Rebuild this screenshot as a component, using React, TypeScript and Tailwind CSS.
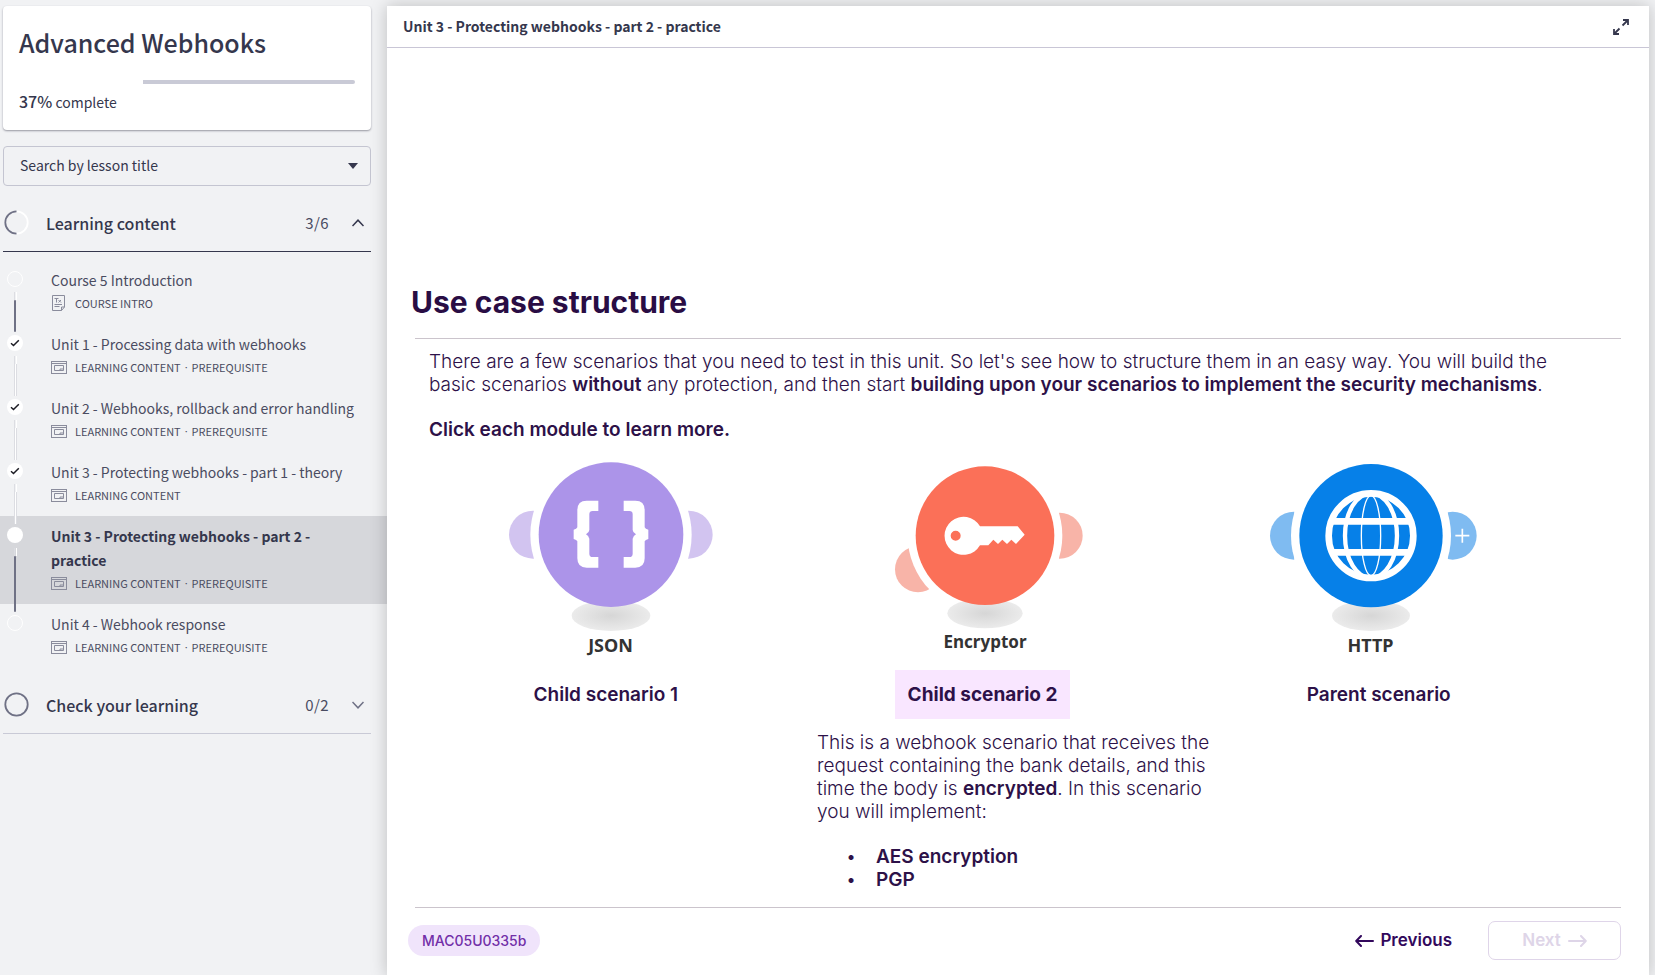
import type { ReactNode } from "react";

type Status = "empty" | "done" | "current";

interface Lesson {
  title: string;
  tags: string[];
  status: Status;
  icon: "text" | "content";
  line?: "light" | "dark";
}

const lessons: Lesson[] = [
  { title: "Course 5 Introduction", tags: ["COURSE INTRO"], status: "empty", icon: "text", line: "dark" },
  { title: "Unit 1 - Processing data with webhooks", tags: ["LEARNING CONTENT", "PREREQUISITE"], status: "done", icon: "content", line: "light" },
  { title: "Unit 2 - Webhooks, rollback and error handling", tags: ["LEARNING CONTENT", "PREREQUISITE"], status: "done", icon: "content", line: "light" },
  { title: "Unit 3 - Protecting webhooks - part 1 - theory", tags: ["LEARNING CONTENT"], status: "done", icon: "content", line: "light" },
  { title: "Unit 3 - Protecting webhooks - part 2 - practice", tags: ["LEARNING CONTENT", "PREREQUISITE"], status: "current", icon: "content", line: "dark" },
  { title: "Unit 4 - Webhook response", tags: ["LEARNING CONTENT", "PREREQUISITE"], status: "empty", icon: "content" },
];

function ContentIcon() {
  return (
    <svg width="16" height="13" viewBox="0 0 16 13" fill="none" stroke="#8a8c9c" aria-hidden="true">
      <rect x="0.5" y="0.5" width="15" height="12" />
      <path d="M0.5 2.5H15.5" />
      <path d="M3.500 4.500H12.500V9.500H3.500Z" />
      <path d="M9 9.500V8H12.500" />
    </svg>
  );
}

function TextIcon() {
  return (
    <svg width="16" height="16" viewBox="0 0 16 16" fill="none" stroke="#8a8c9c" aria-hidden="true">
      <path d="M1.500 0.500H13.500V12L10.500 15.500H1.500Z M13.500 12H10.500V15.500" />
      <path d="M3.500 3.500H7.500M5.500 3.500V7.500M7.500 5L10 7.500M10 5L7.500 7.500" />
      <path d="M3.500 9.500H11M3.500 11.500H8.500" />
    </svg>
  );
}

function StatusDot({ status }: { status: Status }) {
  if (status === "empty") {
    return <span className="size-4 shrink-0 rounded-full border border-white" />;
  }
  return (
    <span className="flex size-4 shrink-0 items-center justify-center rounded-full bg-white">
      {status === "done" && (
        <svg width="10" height="8" viewBox="0 0 10 8" fill="none" stroke="#1c1c24" strokeWidth="1.5" aria-hidden="true">
          <path d="M1 4.200L3.500 6.500L8.800 1.200" />
        </svg>
      )}
    </span>
  );
}

function LessonRow({ lesson }: { lesson: Lesson }) {
  const active = lesson.status === "current";
  return (
    <li className={active ? "flex bg-[#d6d7db]" : "flex"}>
      <div className="relative z-10 flex w-[51px] shrink-0 flex-col items-start pt-[11px] pl-[7px]">
        <StatusDot status={lesson.status} />
        {lesson.line && (
          <span className="mt-[5px] -mb-2 ml-[7px] flex w-[3px] flex-1 flex-col">
            <span className="h-2 border-r border-l border-r-white border-l-[#dcdde2]" />
            <span
              className={
                lesson.line === "dark"
                  ? "w-[2px] flex-1 rounded-full bg-[#6f7185]"
                  : "flex-1 border-r border-l border-r-[#dcdde2] border-l-[#dcdde2] bg-white"
              }
            />
          </span>
        )}
      </div>
      <a href="#lesson" className="flex-1 pt-2 pr-6 pb-[10px]">
        <span className={active ? "block text-[14px] leading-6 font-bold text-[#35374d]" : "block text-[14px] leading-6 text-[#4a4c61]"}>
          {lesson.title}
        </span>
        <span className="flex h-[22px] items-center gap-2 text-[11px] leading-5 text-[#4a4c61]">
          {lesson.icon === "text" ? <TextIcon /> : <ContentIcon />}
          <span className="flex gap-1">
            {lesson.tags.map((tag, i) => (
              <span key={tag} className="flex gap-1">
                {i > 0 && <span className="font-['Open_Sans',sans-serif]">·</span>}
                {tag}
              </span>
            ))}
          </span>
        </span>
      </a>
    </li>
  );
}

function SectionHeader({ title, count, open }: { title: string; count: string; open: boolean }) {
  return (
    <button
      type="button"
      aria-expanded={open}
      className={
        open
          ? "mt-2 mr-4 ml-[3px] flex h-[58px] items-center border-b border-[#35374d] pr-[7px] pl-px text-left"
          : "mt-2 mr-4 ml-[3px] flex h-[58px] items-center border-b border-[#c9cad6] pr-[7px] pl-px text-left"
      }
    >
      <svg width="25" height="25" viewBox="0 0 25 25" fill="none" strokeWidth="1.8" aria-hidden="true">
        <circle cx="12.500" cy="12.500" r="11.200" stroke={open ? "#ffffff" : "#6f7185"} />
        {open && <path d="M12.500 1.300A11.200 11.200 0 0 0 12.500 23.700" stroke="#6f7185" />}
      </svg>
      <span className="ml-[17px] flex-1 text-[16px] leading-6 font-medium text-[#35374d]">{title}</span>
      <span className="text-[15px] leading-6 tracking-wide text-[#4a4c61]">{count}</span>
      <svg className="ml-[23px]" width="12" height="8" viewBox="0 0 12 8" fill="none" stroke={open ? "#35374d" : "#6f7185"} strokeWidth="1.500" aria-hidden="true">
        <path d={open ? "M0.500 7L6 1.200L11.500 7" : "M0.500 1L6 6.800L11.500 1"} />
      </svg>
    </button>
  );
}

function Sidebar() {
  return (
    <aside className="flex w-[387px] shrink-0 flex-col pt-[6px] font-['Noto_Sans_CJK_SC','Noto_Sans',sans-serif]">
      <section className="mr-4 ml-[3px] rounded-[4px] bg-white px-4 pt-5 pb-4 shadow-[0_1px_2px_rgba(40,40,60,0.45)]">
        <h1 className="text-[25px] leading-8 font-medium text-[#35374d]">Advanced Webhooks</h1>
        <div role="progressbar" aria-label="Course progress" aria-valuenow={37} aria-valuemin={0} aria-valuemax={100} className="mt-[22px] flex h-1">
          <span className="w-[37%] bg-white" />
          <span className="flex-1 rounded-r-full bg-[#c9cad6]" />
        </div>
        <p className="mt-[6px] text-[14px] leading-6 text-[#35374d]">
          <strong className="text-[16px] leading-none font-medium">37%</strong> complete
        </p>
      </section>

      <div className="relative mt-4 mr-4 ml-[3px]">
        <select aria-label="Search by lesson title" className="block h-10 w-full appearance-none rounded-[4px] border border-[#c4c5d1] bg-transparent px-4 pb-[2px] text-[14px] text-[#35374d]">
          <option>Search by lesson title</option>
        </select>
        <svg className="pointer-events-none absolute top-4 right-[13px]" width="10" height="8" viewBox="0 0 10 8" fill="#35374d" aria-hidden="true">
          <path d="M0 1H10L5 7Z" />
        </svg>
      </div>

      <SectionHeader title="Learning content" count="3/6" open />
      <ul className="pt-2">
        {lessons.map((l) => (
          <LessonRow key={l.title} lesson={l} />
        ))}
      </ul>
      <SectionHeader title="Check your learning" count="0/2" open={false} />
    </aside>
  );
}

/* Module drawings use three units per pixel. */
function JsonModule() {
  return (
    <svg width="220" height="174" viewBox="61 57 660 522" aria-hidden="true">
      <defs>
        <radialGradient id="floor">
          <stop offset="0" stopColor="#d6d6d6" />
          <stop offset="1" stopColor="#ebebeb" />
        </radialGradient>
      </defs>
      <circle cx="157" cy="284" r="72" fill="#d2c4f0" />
      <circle cx="624" cy="284" r="72" fill="#d2c4f0" />
      <path d="M160 200H622V370H160Z" fill="#fff" />
      <circle cx="391" cy="284" r="242" fill="#fff" />
      <ellipse cx="391" cy="527" rx="118" ry="46" fill="url(#floor)" />
      <circle cx="391" cy="284" r="217" fill="#ac94e9" />
      <g fill="#fff">
        <path d="M353 182H318Q290 182 290 210V262Q288 267 279 269V297Q288 299 290 304V355Q290 383 318 383H353V351H336Q326 351 326 341V296Q326 289 316 283Q326 277 326 270V223Q326 213 336 213H353Z" />
        <path d="M429 182H464Q492 182 492 210V262Q494 267 503 269V297Q494 299 492 304V355Q492 383 464 383H429V351H446Q456 351 456 341V296Q456 289 466 283Q456 277 456 270V223Q456 213 446 213H429Z" />
      </g>
    </svg>
  );
}

function EncryptorModule() {
  return (
    <svg width="220" height="171" viewBox="46 57 660 513" aria-hidden="true">
      <circle cx="175" cy="388" r="69" fill="#f8b4a8" />
      <circle cx="600" cy="287" r="69" fill="#f8b4a8" />
      <path d="M376 200H598V370H376Z" fill="#fff" />
      <circle cx="376" cy="287" r="232" fill="#fff" />
      <ellipse cx="376" cy="520" rx="113" ry="45" fill="url(#floor)" />
      <circle cx="376" cy="287" r="208" fill="#fb7058" />
      <path
        fill="#fff"
        fillRule="evenodd"
        d="M361 259A57 57 0 1 0 361 316H386L401 299L415 312L428 299L442 312L455 299L469 312L495 284L474 259ZM288 272A15 15 0 1 1 288 302A15 15 0 1 1 288 272Z"
      />
    </svg>
  );
}

function HttpModule() {
  return (
    <svg width="220" height="174" viewBox="62 57 660 522" aria-hidden="true">
      <circle cx="161" cy="287" r="72" fill="#7fbbf1" />
      <circle cx="637" cy="287" r="72" fill="#7fbbf1" />
      <path d="M162 200H622V370H162Z" fill="#fff" />
      <circle cx="392" cy="287" r="240" fill="#fff" />
      <path d="M645 287H687M666 266V308" stroke="#fff" strokeWidth="5" />
      <ellipse cx="392" cy="527" rx="117" ry="46" fill="url(#floor)" />
      <circle cx="392" cy="287" r="215" fill="#0680e8" />
      <g fill="none" stroke="#fff">
        <circle cx="392" cy="287" r="127" strokeWidth="20" />
        <ellipse cx="392" cy="287" rx="78" ry="127" strokeWidth="13" />
        <ellipse cx="392" cy="287" rx="29" ry="120" strokeWidth="4" />
        <path d="M275 244H509M275 337H509" strokeWidth="20" />
      </g>
    </svg>
  );
}

function Module({ name, compact, children }: { name: string; compact?: boolean; children: ReactNode }) {
  return (
    <button type="button" className="flex flex-col items-center font-['Noto_Sans',sans-serif] font-bold text-[#333333]">
      {children}
      <span className={compact ? "text-[17px] leading-6" : "text-[18px] leading-6"}>{name}</span>
    </button>
  );
}

const steps = ["AES encryption", "PGP"];

export default function App() {
  return (
    <div className="flex min-h-screen bg-[#f1f2f4]">
      <Sidebar />
      <main className="relative mt-[6px] mr-[6px] flex min-w-0 flex-1 flex-col bg-white font-['Inter',sans-serif] text-[#2d1148] shadow-[0_0_16px_rgba(0,0,0,0.22)]">
        <header className="flex h-[42px] items-center justify-between border-b border-[#c9c6d6] pr-5 pl-4">
          <h2 className="font-['Noto_Sans_CJK_SC','Noto_Sans',sans-serif] text-[14px] font-bold text-[#35374d]">
            Unit 3 - Protecting webhooks - part 2 - practice
          </h2>
          <button type="button" aria-label="Full screen">
            <svg width="16" height="16" viewBox="0 0 16 16" fill="none" stroke="#35374d" strokeWidth="1.800" aria-hidden="true">
              <path d="M10 1H15V6M15 1L9.500 6.500M1 10V15H6M1 15L6.500 9.500" />
            </svg>
          </button>
        </header>

        <div className="flex flex-col px-7">
          <h1 className="mt-[234px] -ml-1 text-[30px] leading-10 font-bold text-[#290d44]">Use case structure</h1>
          <div className="mt-4 border-t border-[#cbc4cc] pt-[11px] pl-[14px] text-[19px] leading-[23px] font-light">
            <p className="max-w-[1140px]">
              There are a few scenarios that you need to test in this unit. So let's see how to structure them in an easy way. You will build the basic scenarios{" "}
              <strong className="font-semibold">without</strong> any protection, and then start{" "}
              <strong className="font-semibold">building upon your scenarios to implement the security mechanisms</strong>.
            </p>
            <p className="mt-[22px] font-semibold">Click each module to learn more.</p>
          </div>

          <div className="mt-[18px] grid grid-cols-[391fr_358fr_413fr] items-start pr-11">
            <Module name="JSON">
              <JsonModule />
            </Module>
            <Module name="Encryptor" compact>
              <EncryptorModule />
            </Module>
            <Module name="HTTP">
              <HttpModule />
            </Module>
          </div>
          <div className="mt-[13px] grid grid-cols-[382fr_372fr_421fr] justify-items-center pr-8 text-[19px] leading-[23px] font-semibold">
            <h3 className="p-[13px]">Child scenario 1</h3>
            <h3 className="bg-[#f9e6ff] p-[13px] font-bold">Child scenario 2</h3>
            <h3 className="p-[13px]">Parent scenario</h3>
          </div>
          <div className="mt-3 ml-[33.333%] w-[400px] text-[19px] leading-[23px] font-light">
            <p>
              This is a webhook scenario that receives the request containing the bank details, and this time the body is{" "}
              <strong className="font-semibold">encrypted</strong>. In this scenario you will implement:
            </p>
            <ul className="mt-[22px] pl-[30px] font-semibold">
              {steps.map((step) => (
                <li key={step} className="flex">
                  <span className="w-[29px] text-[16px]">•</span>
                  {step}
                </li>
              ))}
            </ul>
          </div>

          <footer className="mt-4 flex items-center border-t border-[#cbc4cc] pt-[13px] pb-4">
            <span className="-ml-[7px] rounded-full bg-[#f0e4fb] px-[14px] py-[6px] text-[14px] leading-[19px] font-medium text-[#722fa8]">MAC05U0335b</span>
            <button type="button" className="mr-9 ml-auto flex items-center gap-[6px] text-[17px] font-semibold text-[#32085c]">
              <svg width="19" height="12" viewBox="0 0 19 12" fill="none" stroke="currentColor" strokeWidth="2" strokeLinecap="round" strokeLinejoin="round" aria-hidden="true">
                <path d="M18 6H1.500M6 1L1.200 6L6 11" />
              </svg>
              Previous
            </button>
            <button type="button" disabled className="flex h-[39px] w-[133px] items-center justify-center gap-[7px] rounded-[7px] border border-[#dfd5e9] text-[17px] font-semibold text-[#ded5e8]">
              Next
              <svg width="19" height="12" viewBox="0 0 19 12" fill="none" stroke="currentColor" strokeWidth="2" strokeLinecap="round" strokeLinejoin="round" aria-hidden="true">
                <path d="M1 6H17.500M13 1L17.800 6L13 11" />
              </svg>
            </button>
          </footer>
        </div>
      </main>
    </div>
  );
}
